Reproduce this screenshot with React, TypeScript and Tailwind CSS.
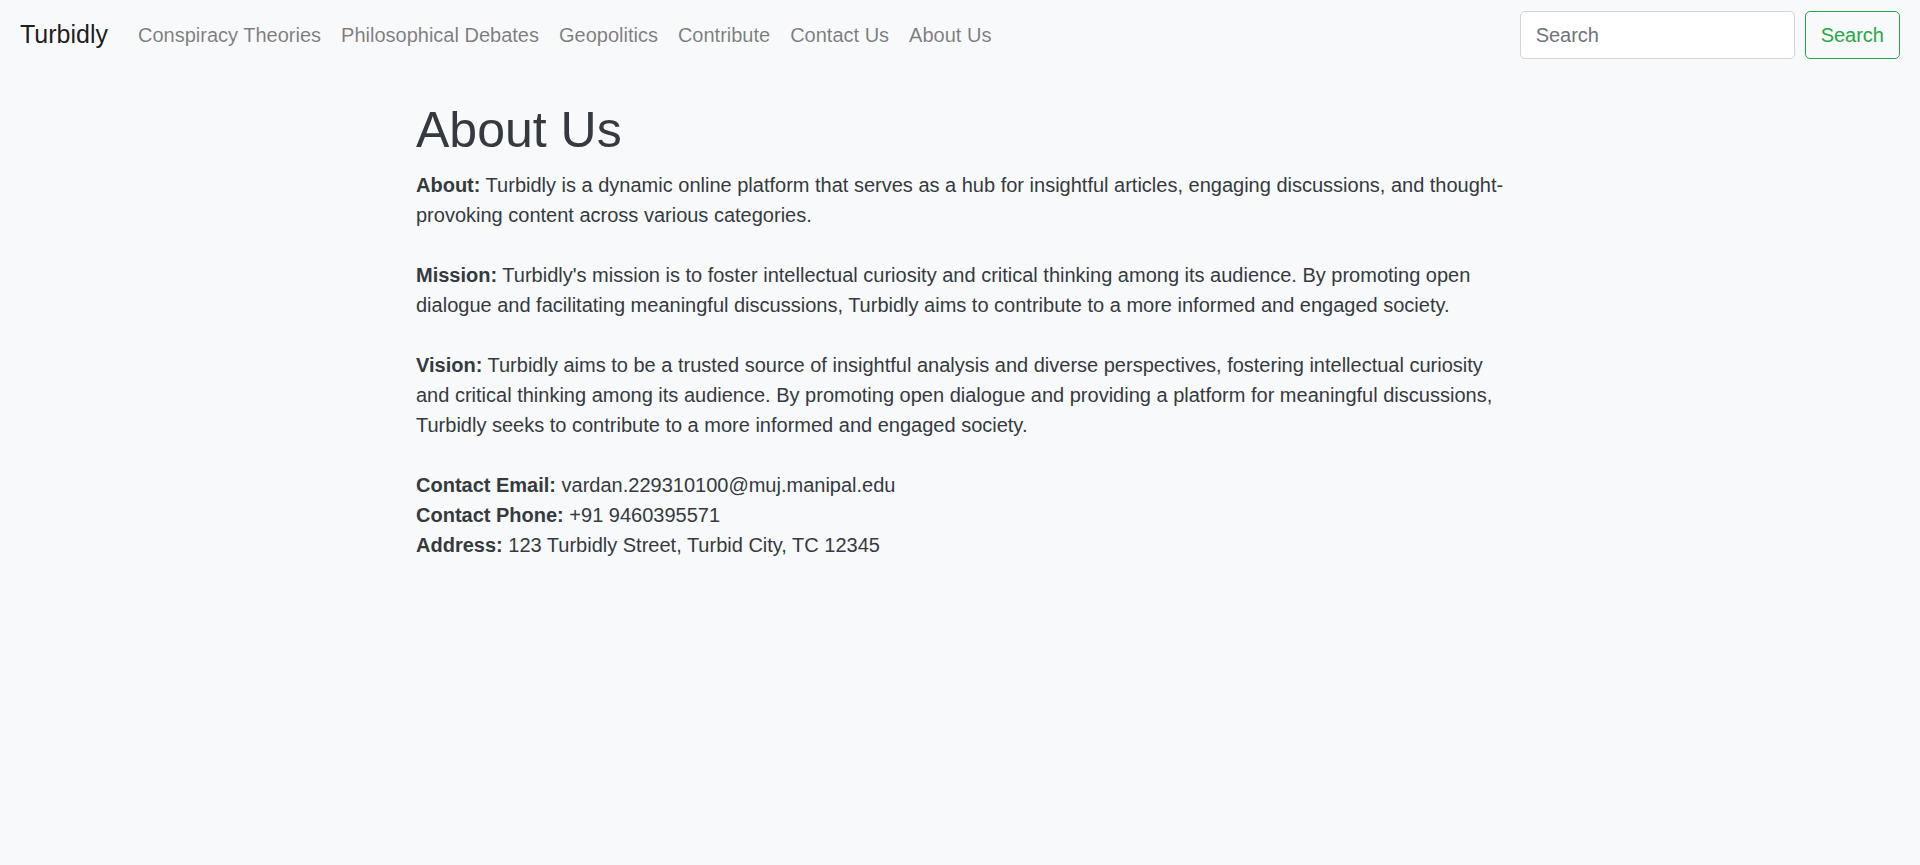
import React from "react";

const links = [
  "Conspiracy Theories",
  "Philosophical Debates",
  "Geopolitics",
  "Contribute",
  "Contact Us",
  "About Us",
];

export default function App() {
  return (
    <div
      className="min-h-[865px] bg-[#f8f9fa] text-[#343a40]"
      style={{ fontFamily: '"Liberation Sans", Arial, sans-serif' }}
    >
      <nav className="flex items-center justify-between px-[20px] py-[10px] bg-[#f8f9fa]">
        <div className="flex items-center">
          <a className="mr-[20px] text-[25px] leading-[37.5px] text-[rgba(0,0,0,0.9)] py-[6px]">
            Turbidly
          </a>
          <ul className="flex items-center">
            {links.map((l) => (
              <li key={l}>
                <a className="block px-[10px] py-[10px] text-[20px] leading-[30px] text-[rgba(0,0,0,0.5)]">
                  {l}
                </a>
              </li>
            ))}
          </ul>
        </div>
        <form className="flex items-center">
          <input
            type="search"
            placeholder="Search"
            className="mr-[10px] h-[47.5px] w-[275px] rounded-[5px] border border-[#ced4da] bg-white px-[15px] py-[7.5px] text-[20px] leading-[30px] text-[#495057] placeholder:text-[#6c757d] outline-none"
          />
          <button
            type="button"
            className="h-[47.5px] rounded-[5px] border border-[#28a745] bg-transparent px-[15px] py-[7.5px] text-[20px] leading-[30px] text-[#28a745]"
          >
            Search
          </button>
        </form>
      </nav>
      <div className="mx-auto w-[1088px] pt-[30px]">
        <h1 className="mb-[10px] text-[50px] leading-[60px] font-normal text-[#343a40]">
          About Us
        </h1>
        <div className="text-[20px] leading-[30px]">
          <p className="mb-[30px]">
            <strong className="font-bold">About:</strong> Turbidly is a dynamic online platform that serves as a hub for insightful articles, engaging discussions, and thought-provoking content across various categories.
          </p>
          <p className="mb-[30px]">
            <strong className="font-bold">Mission:</strong> Turbidly's mission is to foster intellectual curiosity and critical thinking among its audience. By promoting open dialogue and facilitating meaningful discussions, Turbidly aims to contribute to a more informed and engaged society.
          </p>
          <p className="mb-[30px]">
            <strong className="font-bold">Vision:</strong> Turbidly aims to be a trusted source of insightful analysis and diverse perspectives, fostering intellectual curiosity and critical thinking among its audience. By promoting open dialogue and providing a platform for meaningful discussions, Turbidly seeks to contribute to a more informed and engaged society.
          </p>
          <p>
            <strong className="font-bold">Contact Email:</strong> vardan.229310100@muj.manipal.edu
            <br />
            <strong className="font-bold">Contact Phone:</strong> +91 9460395571
            <br />
            <strong className="font-bold">Address:</strong> 123 Turbidly Street, Turbid City, TC 12345
          </p>
        </div>
      </div>
    </div>
  );
}
